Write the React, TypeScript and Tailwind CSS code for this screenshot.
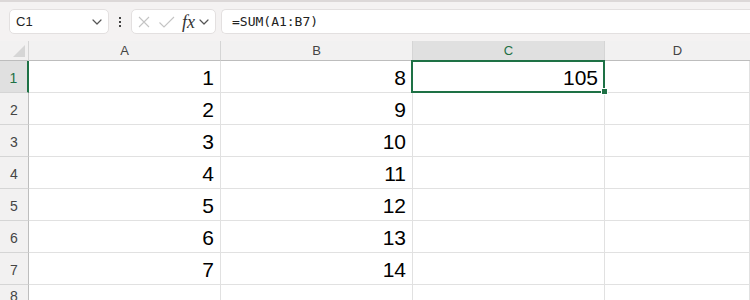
import React from "react";

const GREEN = "#1e7145";

function Chevron({ className = "" }: { className?: string }) {
  return (
    <svg width="10" height="6" viewBox="0 0 10 6" className={className} fill="none">
      <path d="M1 1l4 4 4-4" stroke="#555" strokeWidth="1.2" strokeLinecap="round" strokeLinejoin="round" />
    </svg>
  );
}

export default function App() {
  const rows = [
    [1, 8, 105],
    [2, 9, null],
    [3, 10, null],
    [4, 11, null],
    [5, 12, null],
    [6, 13, null],
    [7, 14, null],
    [null, null, null],
  ];
  const cols = ["A", "B", "C", "D"];
  return (
    <div className="w-[750px] h-[300px] overflow-hidden bg-white" style={{ fontFamily: '"Liberation Sans", Arial, sans-serif' }}>
      <div className="h-[2px] bg-[#dcd8d8]" />
      <div className="h-[39px] bg-[#f4f2f2] flex items-start pt-[7px] pl-[9px]">
        <div className="w-[100px] h-[25px] bg-white border border-[#e3e0e0] rounded-[5px] flex items-center justify-between pl-[6px] pr-[6px]">
          <span className="text-[13px] text-[#222]">C1</span>
          <Chevron />
        </div>
        <div className="w-[22px] h-[25px] flex flex-col items-center justify-center gap-[2px]">
          <div className="w-[2px] h-[2px] bg-[#444]" />
          <div className="w-[2px] h-[2px] bg-[#444]" />
          <div className="w-[2px] h-[2px] bg-[#444]" />
        </div>
        <div className="w-[85px] h-[25px] bg-white border border-[#e3e0e0] rounded-[5px] flex items-center pl-[5px]">
          <svg width="14" height="14" viewBox="0 0 14 14" fill="none">
            <path d="M2 2l10 10M12 2L2 12" stroke="#c4c4c4" strokeWidth="1.1" />
          </svg>
          <svg width="18" height="14" viewBox="0 0 18 14" fill="none" className="ml-[7px]">
            <path d="M1.5 7.5l4.5 4.5L16 2" stroke="#c4c4c4" strokeWidth="1.1" />
          </svg>
          <span className="ml-[6px] text-[18px] italic text-[#333] leading-none" style={{ fontFamily: '"Liberation Serif", "Times New Roman", serif' }}>
            fx
          </span>
          <Chevron className="ml-[4px]" />
        </div>
        <div className="ml-[5px] flex-1 h-[25px] bg-white border border-r-0 border-[#e3e0e0] rounded-l-[5px] flex items-center pl-[10px]">
          <span className="text-[13px] text-[#222]" style={{ fontFamily: '"DejaVu Sans Mono", "Liberation Mono", monospace' }}>
            =SUM(A1:B7)
          </span>
        </div>
      </div>
      <div className="relative">
        <div className="grid grid-cols-[29px_192px_192px_192px_1fr]">
          <div className="h-[20px] bg-[#f2f1f1] border-r border-b border-r-[#d5d5d5] border-b-[#bdbdbd] flex items-end justify-end pr-[3px] pb-[3px]">
            <svg width="12" height="12" viewBox="0 0 12 12">
              <path d="M12 0L12 12L0 12Z" fill="#d6d6d6" />
            </svg>
          </div>
          {cols.map((c) => (
            <div
              key={c}
              className={`h-[20px] border-b border-b-[#bdbdbd] flex items-center justify-center text-[13px] ${
                c === "C" ? "bg-[#e0e0e0] text-[#1e7145]" : "bg-[#f2f1f1] text-[#444]"
              } ${c === "D" ? "" : "border-r border-r-[#d5d5d5]"}`}
            >
              {c}
            </div>
          ))}
          {rows.map((r, i) => (
            <React.Fragment key={i}>
              <div
                className={`h-[32px] border-b border-b-[#d5d5d5] flex justify-center text-[14px] leading-none ${
                  i === 7 ? "items-start pt-[4px]" : "items-end pb-[7px]"
                } ${
                  i === 0
                    ? "bg-[#e0e0e0] text-[#1e7145] border-r-2 border-r-[#1e7145]"
                    : "bg-[#f2f1f1] text-[#444] border-r border-r-[#bdbdbd]"
                }`}
              >
                {i + 1}
              </div>
              {[0, 1, 2, 3].map((j) => (
                <div
                  key={j}
                  className="h-[32px] border-r border-b border-[#e1e1e1] flex items-end justify-end pr-[6px] pb-[4px] text-[21px] leading-none text-black"
                >
                  {j < 3 && r[j] !== null ? r[j] : ""}
                </div>
              ))}
            </React.Fragment>
          ))}
        </div>
        <div className="absolute left-[411px] top-[19px] w-[194px] h-[33px] border-2 pointer-events-none" style={{ borderColor: GREEN }} />
        <div className="absolute left-[601px] top-[47px] w-[7px] h-[7px] border border-white" style={{ backgroundColor: GREEN }} />
      </div>
    </div>
  );
}
